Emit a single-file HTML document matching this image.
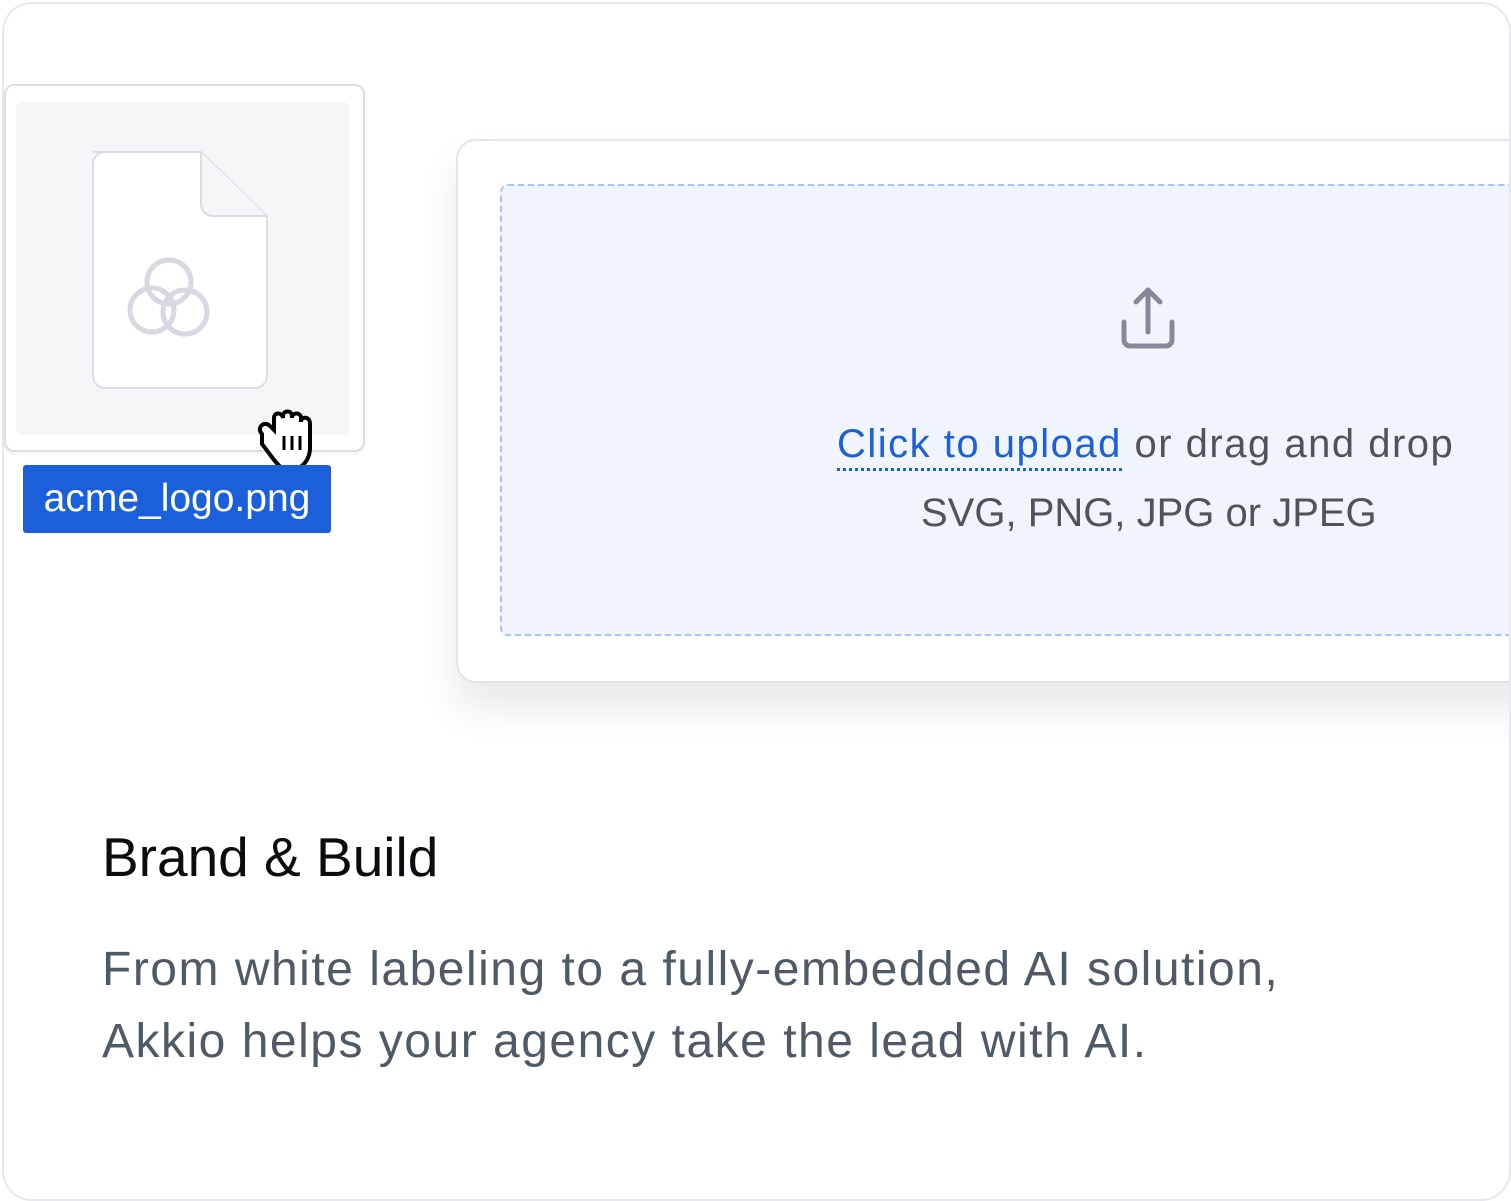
<!DOCTYPE html>
<html><head><meta charset="utf-8"><style>
html,body{margin:0;padding:0;background:#fff;}
body{width:1511px;height:1201px;position:relative;overflow:hidden;font-family:"Liberation Sans",sans-serif;}
.outer{position:absolute;left:2px;top:2px;width:1505px;height:1195px;border:2px solid #e8e8ec;border-radius:30px;overflow:hidden;background:#fff;}
.fcard{position:absolute;left:0px;top:80px;width:357px;height:364px;border:2px solid #dcdce3;border-radius:10px;background:#fff;box-shadow:0 2px 4px rgba(0,0,0,.05);}
.fin{position:absolute;left:10px;top:16px;width:333px;height:333px;background:#f6f6f9;border-radius:6px;}
.label{position:absolute;left:19px;top:461px;width:308px;height:68px;background:#1b5fdb;border-radius:3px;color:#fff;font-size:39px;line-height:68px;text-align:center;}
.panel{position:absolute;left:452px;top:135px;width:1100px;height:540px;border:2px solid #e3e3e8;border-radius:20px;background:#fff;box-shadow:0 25px 40px rgba(0,0,0,.09);}
.drop{position:absolute;left:42px;top:43px;width:1100px;height:448px;border:2px dashed #a9c4f4;border-radius:8px;background:#f0f4fc;}
.t1{position:absolute;left:335px;top:236px;font-size:40px;letter-spacing:1.5px;color:#52525e;white-space:nowrap;}
.t1 span{color:#1b5fdb;border-bottom:3px dotted #1b5fdb;padding-bottom:2px;}
.t2{position:absolute;left:419px;top:305px;font-size:40px;color:#52525e;white-space:nowrap;}
h1{position:absolute;left:98px;top:821px;margin:0;font-weight:normal;font-size:55px;color:#0b0b10;}
p{position:absolute;left:98px;top:930px;margin:0;font-size:48px;letter-spacing:1.5px;line-height:72px;color:#4e5a66;}
</style></head><body>
<div class="outer">
<div class="fcard"><div class="fin">
<svg width="333" height="333" style="position:absolute;left:0;top:0">
<path d="M77 50 h108 l66 64 v160 a12 12 0 0 1 -12 12 h-150 a12 12 0 0 1 -12 -12 v-212 a12 12 0 0 1 12 -12z" fill="#fff" stroke="#dcdce4" stroke-width="2"/>
<path d="M185 50 v52 a12 12 0 0 0 12 12 h54" fill="#f6f6f9" stroke="#dcdce4" stroke-width="2"/>
<g fill="none" stroke="#d8d8e2" stroke-width="5"><circle cx="153" cy="180" r="22"/><circle cx="136" cy="208" r="22"/><circle cx="169" cy="210" r="22"/></g>
</svg></div></div>
<svg width="80" height="80" style="position:absolute;left:244px;top:402px">
<path d="M14 28 c-6 -6 2 -14 8 -8 l4 4 v-12 c0 -6 8 -6 9 0 v-2 c0 -6 9 -6 9 0 v2 c0 -6 9 -6 9 0 v4 c0 -6 9 -6 9 2 v24 c0 10 -6 18 -12 20 h-16 c-6 -4 -12 -14 -20 -24z" fill="#fff" stroke="#000" stroke-width="4"/>
<path d="M36 30 v14 M44 30 v14 M52 30 v14" stroke="#000" stroke-width="3"/>
</svg>
<div class="label">acme_logo.png</div>
<div class="panel"><div class="drop">
<svg width="80" height="80" style="position:absolute;left:606px;top:96px"><g fill="none" stroke="#878799" stroke-width="5" stroke-linecap="round" stroke-linejoin="round"><path d="M40 8 v42 M28 20 l12 -12 l12 12"/><path d="M16 40 v18 a6 6 0 0 0 6 6 h36 a6 6 0 0 0 6 -6 v-18"/></g></svg>
<div class="t1"><span>Click to upload</span> or drag and drop</div>
<div class="t2">SVG, PNG, JPG or JPEG</div>
</div></div>
<h1>Brand &amp; Build</h1>
<p>From white labeling to a fully-embedded AI solution,<br>Akkio helps your agency take the lead with AI.</p>
</div>
</body></html>
